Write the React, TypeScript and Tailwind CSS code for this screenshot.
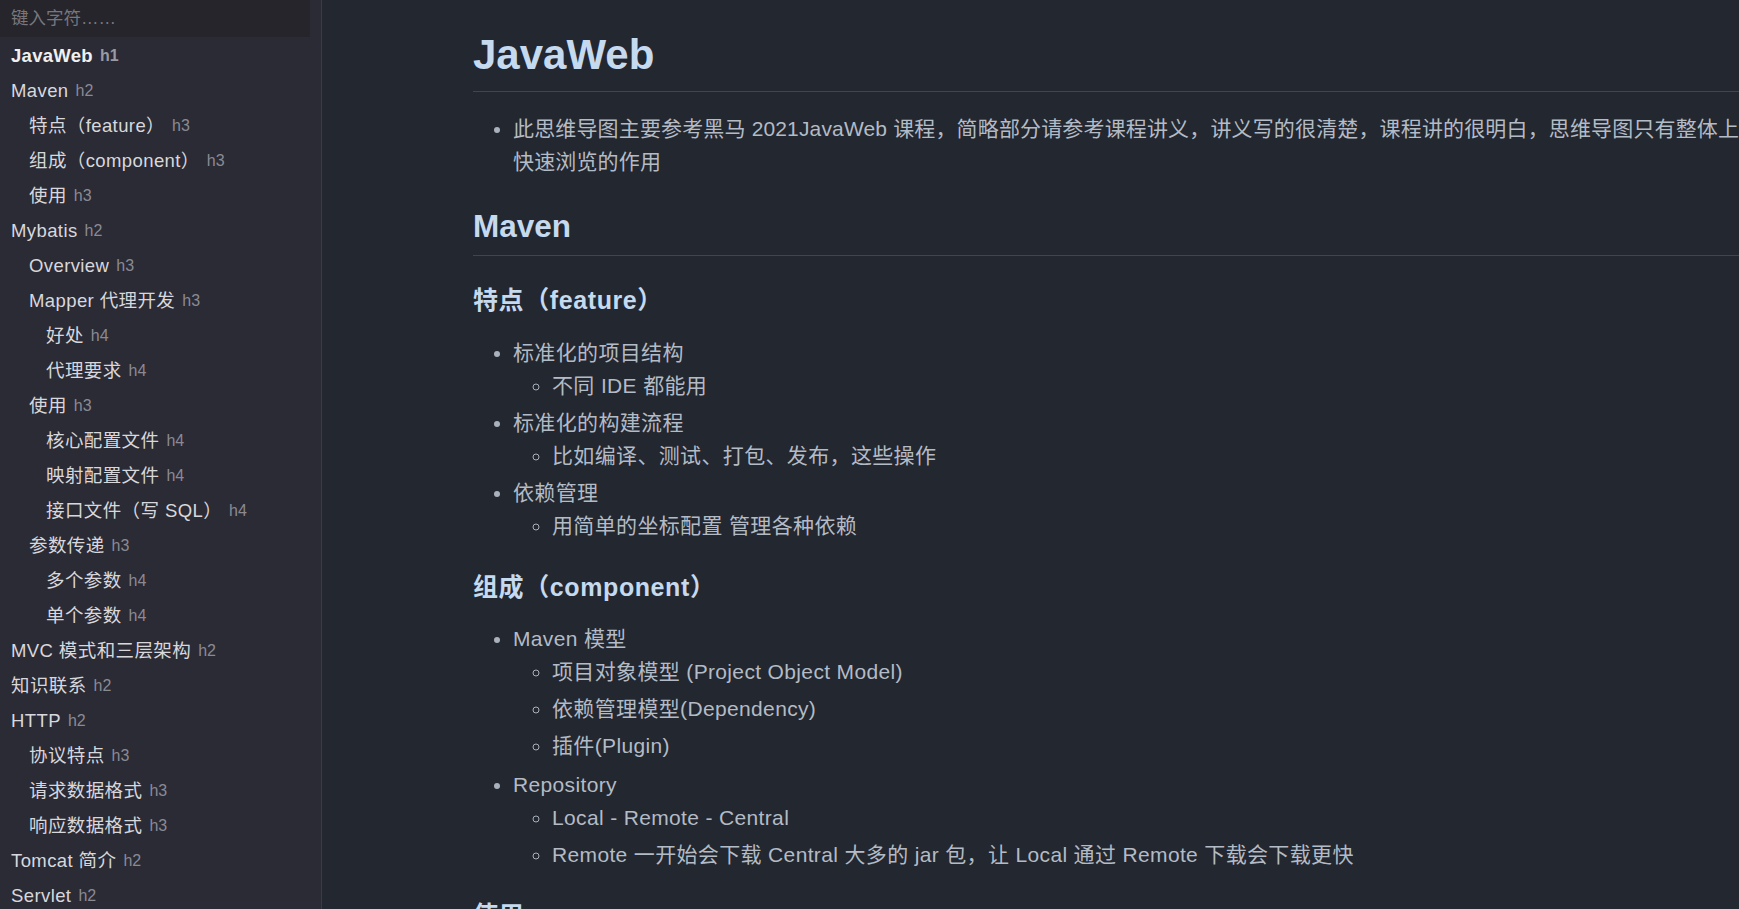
const toc: { text: string; tag: string; level: number }[] = [
  { text: 'JavaWeb', tag: 'h1', level: 0 },
  { text: 'Maven', tag: 'h2', level: 0 },
  { text: '特点（feature）', tag: 'h3', level: 1 },
  { text: '组成（component）', tag: 'h3', level: 1 },
  { text: '使用', tag: 'h3', level: 1 },
  { text: 'Mybatis', tag: 'h2', level: 0 },
  { text: 'Overview', tag: 'h3', level: 1 },
  { text: 'Mapper 代理开发', tag: 'h3', level: 1 },
  { text: '好处', tag: 'h4', level: 2 },
  { text: '代理要求', tag: 'h4', level: 2 },
  { text: '使用', tag: 'h3', level: 1 },
  { text: '核心配置文件', tag: 'h4', level: 2 },
  { text: '映射配置文件', tag: 'h4', level: 2 },
  { text: '接口文件（写 SQL）', tag: 'h4', level: 2 },
  { text: '参数传递', tag: 'h3', level: 1 },
  { text: '多个参数', tag: 'h4', level: 2 },
  { text: '单个参数', tag: 'h4', level: 2 },
  { text: 'MVC 模式和三层架构', tag: 'h2', level: 0 },
  { text: '知识联系', tag: 'h2', level: 0 },
  { text: 'HTTP', tag: 'h2', level: 0 },
  { text: '协议特点', tag: 'h3', level: 1 },
  { text: '请求数据格式', tag: 'h3', level: 1 },
  { text: '响应数据格式', tag: 'h3', level: 1 },
  { text: 'Tomcat 简介', tag: 'h2', level: 0 },
  { text: 'Servlet', tag: 'h2', level: 0 },
]

const indent = ['pl-[11px]', 'pl-[29px]', 'pl-[46px]']

function Sidebar() {
  return (
    <aside className="w-[322px] h-[909px] shrink-0 overflow-hidden bg-[#2b2b36] border-r border-[#3b3b47] flex flex-col">
      <div className="w-[310px] h-[37px] shrink-0 bg-[#25252b] flex items-center pl-[11px] text-[17.5px] text-[#77777f]">
        键入字符……
      </div>
      <nav className="mt-[1px] shrink-0 flex flex-col">
        {toc.map((item, i) => (
          <div key={i} className={`h-[35px] shrink-0 flex items-center ${indent[item.level]}`}>
            <span
              className={
                item.tag === 'h1'
                  ? 'text-[18.5px] tracking-[0.3px] font-bold text-[#f0f0f0]'
                  : 'text-[18.5px] tracking-[0.4px] text-[#d8d8dc]'
              }
            >
              {item.text}
            </span>
            <span
              className={
                item.tag === 'h1'
                  ? 'ml-[7px] text-[16px] font-bold text-[#9a9aa2]'
                  : 'ml-[7px] text-[16px] text-[#8a8a93]'
              }
            >
              {item.tag}
            </span>
          </div>
        ))}
      </nav>
    </aside>
  )
}

function Sub({ items }: { items: string[] }) {
  return (
    <ul className="list-[circle] pl-[39px] marker:text-[#a9b1bc]">
      {items.map((t, i) => (
        <li key={i} className={i > 0 ? 'mt-[4px]' : ''}>
          {t}
        </li>
      ))}
    </ul>
  )
}

function H3({ children, mt }: { children: React.ReactNode; mt: string }) {
  return (
    <h3 className={`${mt} text-[25px] leading-[36px] tracking-[0.6px] font-bold text-[#c5d9ef]`}>{children}</h3>
  )
}

export default function App() {
  return (
    <div className="h-[909px] w-[1739px] overflow-hidden flex bg-[#23272f] font-['Liberation_Sans','Noto_Sans_CJK_SC',sans-serif]">
      <Sidebar />
      <main className="flex-1 min-w-0 -mr-[11px] pl-[151px] text-[21px] leading-[33px] tracking-[0.35px] text-[#b3bbc6]">
        <h1 className="mt-[31px] text-[42px] leading-[48px] tracking-normal font-bold text-[#c5d9ef] pb-[12px] border-b border-[#42454b]">
          JavaWeb
        </h1>
        <ul className="mt-[20px] list-disc pl-[40px] tracking-[0.15px] marker:text-[#a9b1bc]">
          <li>
            此思维导图主要参考黑马 2021JavaWeb 课程，简略部分请参考课程讲义，讲义写的很清楚，课程讲的很明白，思维导图只有整体上快速浏览的作用
          </li>
        </ul>

        <h2 className="mt-[28px] text-[31.5px] leading-[40px] tracking-normal font-bold text-[#c5d9ef] pb-[9px] border-b border-[#42454b]">
          Maven
        </h2>

        <H3 mt="mt-[26px]">特点（feature）</H3>
        <ul className="mt-[18px] list-disc pl-[40px] marker:text-[#a9b1bc]">
          <li>
            标准化的项目结构
            <Sub items={['不同 IDE 都能用']} />
          </li>
          <li className="mt-[4px]">
            标准化的构建流程
            <Sub items={['比如编译、测试、打包、发布，这些操作']} />
          </li>
          <li className="mt-[4px]">
            依赖管理
            <Sub items={['用简单的坐标配置 管理各种依赖']} />
          </li>
        </ul>

        <H3 mt="mt-[27px]">组成（component）</H3>
        <ul className="mt-[17px] list-disc pl-[40px] marker:text-[#a9b1bc]">
          <li>
            Maven 模型
            <Sub
              items={['项目对象模型 (Project Object Model)', '依赖管理模型(Dependency)', '插件(Plugin)']}
            />
          </li>
          <li className="mt-[6px]">
            Repository
            <Sub
              items={[
                'Local - Remote - Central',
                'Remote 一开始会下载 Central 大多的 jar 包，让 Local 通过 Remote 下载会下载更快',
              ]}
            />
          </li>
        </ul>

        <H3 mt="mt-[26px]">使用</H3>
      </main>
    </div>
  )
}
